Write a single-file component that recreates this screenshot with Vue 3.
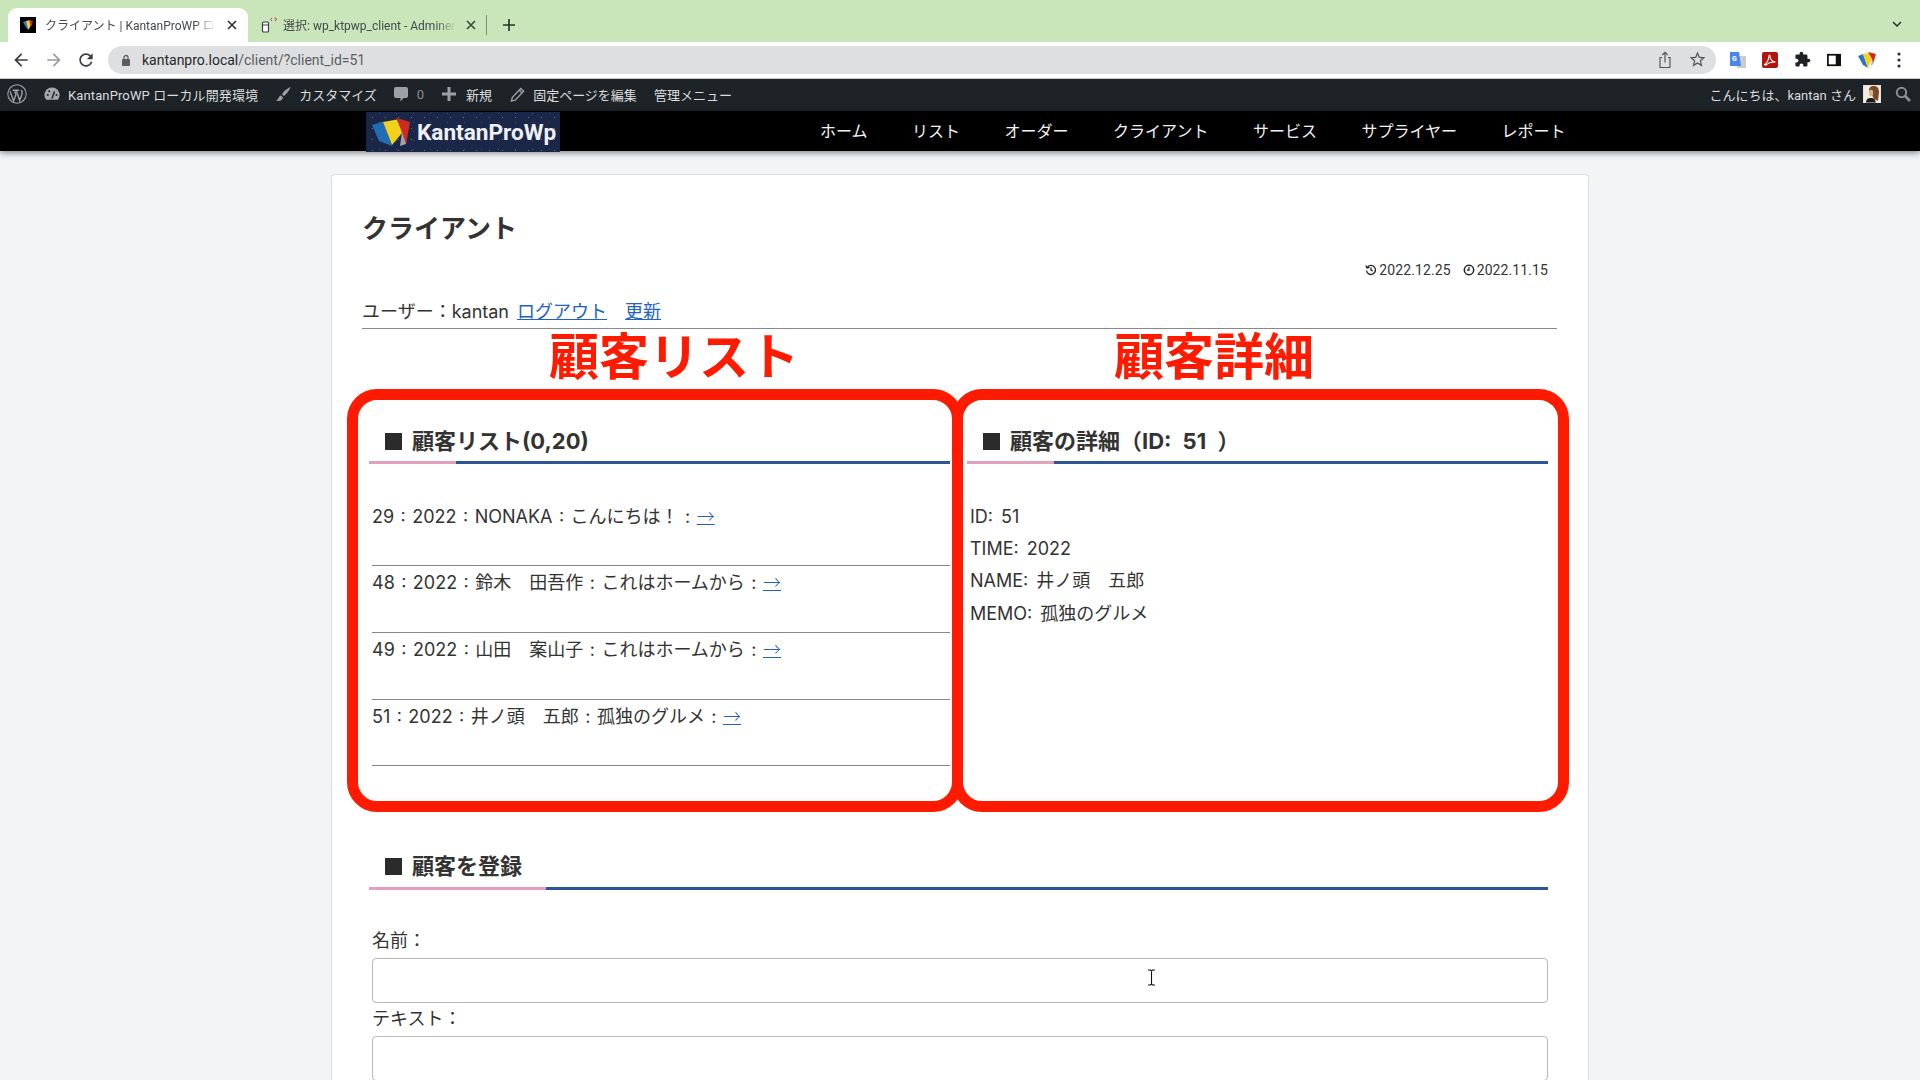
<template>
  <div class="screen">
    <!-- browser chrome -->
    <div class="tabstrip">
      <div class="tab active">
        <span class="favicon">
          <svg viewBox="0 0 16 16" width="16" height="16">
            <path d="M3 5l3-1 3 8-2 0z" fill="#2f7fc9"/>
            <path d="M6 4l4-1 1.5 4L8.5 13z" fill="#f3d21f"/>
            <path d="M9 3l4 1-2 6z" fill="#d8261c"/>
          </svg>
        </span>
        <span class="tab-title">クライアント | KantanProWP ローカル開発環境</span>
        <svg class="tab-close" viewBox="0 0 10 10" width="10" height="10"><path d="M1 1l8 8M9 1l-8 8" stroke="#2b2f33" stroke-width="1.6"/></svg>
      </div>
      <div class="tab second">
        <svg class="pma" viewBox="0 0 18 16" width="18" height="16">
          <rect x="2.5" y="5" width="6" height="10" rx="1" fill="#fff" stroke="#33434a" stroke-width="1.2"/>
          <path d="M2.5 8h6" stroke="#33434a"/>
          <path d="M12 4L10.5 2.500 12 1M14.500 1.500a1 1 0 1 1 1 1.500v1" fill="none" stroke="#c0272d" stroke-width=".9"/>
        </svg>
        <span class="tab-title">選択: wp_ktpwp_client - Adminer</span>
        <svg class="tab-close" viewBox="0 0 10 10" width="10" height="10"><path d="M1 1l8 8M9 1l-8 8" stroke="#3a4a3a" stroke-width="1.6"/></svg>
      </div>
      <span class="tab-sep"></span>
      <svg class="tab-new" viewBox="0 0 12 12" width="12" height="12"><path d="M6 0v12M0 6h12" stroke="#26312a" stroke-width="1.6"/></svg>
      <svg class="tab-chevron" viewBox="0 0 10 6" width="10" height="6"><path d="M1 1l4 4 4-4" fill="none" stroke="#26312a" stroke-width="1.5"/></svg>
    </div>

    <div class="toolbar">
      <svg class="tb-icon back" viewBox="0 0 24 24" width="20" height="20"><path d="M20 11H7.830l5.590-5.590L12 4l-8 8 8 8 1.410-1.410L7.830 13H20v-2z" fill="#3a3d40"/></svg>
      <svg class="tb-icon forward" viewBox="0 0 24 24" width="20" height="20"><path d="M4 11h12.170l-5.590-5.590L12 4l8 8-8 8-1.410-1.410L16.170 13H4v-2z" fill="#9a9c9e"/></svg>
      <svg class="tb-icon reload" viewBox="0 0 24 24" width="20" height="20"><path d="M17.650 6.350C16.200 4.900 14.210 4 12 4c-4.420 0-7.990 3.580-7.990 8s3.570 8 7.990 8c3.730 0 6.840-2.550 7.730-6h-2.080c-.82 2.330-3.040 4-5.650 4-3.310 0-6-2.690-6-6s2.690-6 6-6c1.660 0 3.140.69 4.220 1.780L13 11h7V4l-2.350 2.350z" fill="#3a3d40"/></svg>
      <div class="omnibox">
        <svg class="lock" viewBox="0 0 10 12" width="10" height="12">
          <rect x="1" y="5" width="8" height="7" rx="1" fill="#5b5e61"/>
          <path d="M3 5V3.500a2 2 0 0 1 4 0V5" fill="none" stroke="#5b5e61" stroke-width="1.300"/>
        </svg>
        <span class="url"><b>kantanpro.local</b>/client/?client_id=51</span>
        <svg class="share" viewBox="0 0 14 18" width="14" height="18">
          <path d="M4 6.500H2v10h10v-10h-2M7 11.500V1.500M4.300 4L7 1.300 9.700 4" fill="none" stroke="#55585b" stroke-width="1.200"/>
        </svg>
        <svg class="star" viewBox="0 0 24 24" width="19" height="19"><path d="M22 9.240l-7.190-.62L12 2 9.190 8.630 2 9.240l5.460 4.730L5.820 21 12 17.270 18.180 21l-1.630-7.030L22 9.240zM12 15.400l-3.760 2.270 1-4.280-3.320-2.880 4.380-.38L12 6.100l1.710 4.040 4.380.38-3.320 2.880 1 4.280L12 15.400z" fill="#55585b"/></svg>
      </div>
      <div class="ext-icons">
        <svg viewBox="0 0 16 16" width="16" height="16">
          <rect x="7" y="4" width="9" height="12" fill="#c9ccd1"/>
          <path d="M0 0h9l2 14H0z" fill="#4a86e8"/>
          <text x="2" y="9" font-size="7" font-weight="700" fill="#fff" font-family="Roboto, sans-serif">G</text>
        </svg>
        <svg viewBox="0 0 16 16" width="16" height="16">
          <rect width="16" height="16" rx="2" fill="#b3150e"/>
          <path d="M2.500 12.500c2-1 4.500-5 4.500-8.500 0-1.300 1-1.300 1 0 0 3 2 6 5.500 6-3 0-7 .8-8.500 2.300-1 1-2.200 1-2.500.2z" fill="none" stroke="#fff" stroke-width="1.100"/>
        </svg>
        <svg viewBox="0 0 24 24" width="17" height="17"><path d="M20.500 11H19V7c0-1.100-.9-2-2-2h-4V3.500C13 2.120 11.880 1 10.500 1S8 2.120 8 3.500V5H4c-1.100 0-1.990.9-1.990 2v3.800H3.500c1.490 0 2.700 1.210 2.700 2.700s-1.210 2.700-2.700 2.700H2V20c0 1.100.9 2 2 2h3.800v-1.500c0-1.490 1.210-2.700 2.700-2.700 1.490 0 2.700 1.210 2.700 2.700V22H17c1.100 0 2-.9 2-2v-4h1.500c1.380 0 2.500-1.120 2.500-2.500S21.880 11 20.500 11z" fill="#1f2124"/></svg>
        <svg viewBox="0 0 16 16" width="14" height="14"><path d="M0 1h16v14H0z" fill="#111"/><rect x="2" y="3" width="8" height="10" fill="#fff"/></svg>
        <svg viewBox="0 0 20 18" width="20" height="18">
          <path d="M1 5l5-2 5 14-5-3z" fill="#2a76c4"/>
          <path d="M6 3l6-1 3 6-4 9z" fill="#f4d31f"/>
          <path d="M11 1l8 2-3 10-1-5z" fill="#d62a1f"/>
          <path d="M15 8l1 5-2 2z" fill="#a9a9a9"/>
        </svg>
        <svg class="dots" viewBox="0 0 4 16" width="4" height="16"><circle cx="2" cy="2" r="1.600" fill="#2e3134"/><circle cx="2" cy="8" r="1.600" fill="#2e3134"/><circle cx="2" cy="14" r="1.600" fill="#2e3134"/></svg>
      </div>
    </div>

    <!-- wp admin bar -->
    <div class="adminbar">
      <svg class="wp-logo" viewBox="0 0 20 20" width="20" height="20">
        <circle cx="10" cy="10" r="9.200" fill="none" stroke="#9ca1a7" stroke-width="1.100"/>
        <path d="M3 7.200l3.600 9.800 2.300-6.400-1.200-3.400M7.200 6.200h-1.600M6.900 6.200h3.500M9.200 6.200l3.500 10.300 2.200-6.300c.5-1.600.1-3.200-.7-4.200M10.300 6.200h1.800" fill="none" stroke="#9ca1a7" stroke-width="1.400"/>
      </svg>
      <span class="ab-item site">
        <svg viewBox="0 0 16 16" width="16" height="16">
          <path d="M8 1.500a7.500 7.500 0 0 0-6.500 11.300l.6 1h11.800l.6-1A7.500 7.500 0 0 0 8 1.500z" fill="#a4a8ac"/>
          <path d="M8 12.500l2.500-7" stroke="#1d2327" stroke-width="1.500"/>
          <circle cx="3.800" cy="9" r="1" fill="#1d2327"/><circle cx="5.200" cy="5.200" r="1" fill="#1d2327"/><circle cx="12.500" cy="9" r="1" fill="#1d2327"/>
        </svg>
        KantanProWP ローカル開発環境
      </span>
      <span class="ab-item">
        <svg viewBox="0 0 16 16" width="16" height="16"><path d="M15.500 1C13 2 8.500 5 7 8.500l2 1.500C11.500 8 14.500 4 15.500 1zM6 9.500C3.500 10 4 13 1 14.500c3 1 6.500.3 7-3z" fill="#9ca1a7"/></svg>
        カスタマイズ
      </span>
      <span class="ab-item">
        <svg viewBox="0 0 14 16" width="14" height="16"><path d="M2 1h10a2 2 0 0 1 2 2v7a2 2 0 0 1-2 2H9.500L6.500 15.500V12H2a2 2 0 0 1-2-2V3a2 2 0 0 1 2-2z" fill="#9ca1a7"/></svg>
        <span class="muted">0</span>
      </span>
      <span class="ab-item new">
        <svg viewBox="0 0 14 14" width="14" height="14"><path d="M7 0v14M0 7h14" stroke="#9ca1a7" stroke-width="3"/></svg>
        新規
      </span>
      <span class="ab-item edit">
        <svg viewBox="0 0 16 16" width="15" height="15"><path d="M11.500 1.500l3 3L5.500 14l-4 1 1-4zM10 3.500l2.500 2.500" fill="none" stroke="#9ca1a7" stroke-width="1.500"/></svg>
        固定ページを編集
      </span>
      <span class="ab-item">管理メニュー</span>
      <span class="ab-right">
        こんにちは、kantan さん
        <svg class="avatar" viewBox="0 0 18 18" width="18" height="18">
          <rect width="18" height="18" fill="#f2ede4"/>
          <path d="M3 18c0-4 2-5 5-5 3 0 4 1 5 5z" fill="#1c1b1a"/>
          <path d="M6 6c0-4 2-5 5-5s5 2 5 6l-1 9-4-2-2-4z" fill="#7a4a25"/>
          <ellipse cx="8" cy="8" rx="2.200" ry="3.200" fill="#d9b591"/>
          <rect x="0" y="0" width="18" height="18" fill="none" stroke="#dcd6cc"/>
        </svg>
        <svg class="ab-search" viewBox="0 0 16 16" width="16" height="16"><circle cx="6.500" cy="6.500" r="4.700" fill="none" stroke="#8c8f94" stroke-width="2"/><path d="M10 10l5 5" stroke="#8c8f94" stroke-width="2.600"/></svg>
      </span>
    </div>

    <!-- site header -->
    <header class="site-header">
      <div class="logo">
        <svg viewBox="0 0 40 30" width="40" height="30">
          <path d="M0 8L11 4.500 20 29l-13-5z" fill="#1e6db5"/>
          <path d="M11 5l14-2.500 5.500 13L20 28z" fill="#f2d11c"/>
          <path d="M25 1l13 4-4 23-4-12z" fill="#cf2a20"/>
          <path d="M30 15l4 12-6 2z" fill="#a5a5a5"/>
        </svg>
        <span class="logo-text">KantanProWp</span>
      </div>
      <nav class="gnav">
        <span v-for="item in navItems" :key="item">{{ item }}</span>
      </nav>
    </header>

    <!-- page content -->
    <main class="card">
      <h1 class="page-title">クライアント</h1>
      <div class="dates">
        <svg viewBox="0 0 12 12" width="12" height="12">
          <path d="M2.200 3.500A4.500 4.500 0 1 1 1.500 6.500M1 1.500l1 2.500 2.500-.6M6 3.500V6l1.800 1" fill="none" stroke="#222" stroke-width="1.300"/>
        </svg>
        <span>2022.12.25</span>
        <svg class="clock" viewBox="0 0 12 12" width="12" height="12">
          <circle cx="6" cy="6" r="4.700" fill="none" stroke="#222" stroke-width="1.500"/>
          <path d="M6 3v3.200H3.800" fill="none" stroke="#222" stroke-width="1.200"/>
        </svg>
        <span>2022.11.15</span>
      </div>
      <div class="user-line">
        ユーザー：kantan <a>ログアウト</a><a class="reload-link">更新</a>
      </div>

      <div class="labels">
        <span class="label-left">顧客リスト</span>
        <span class="label-right">顧客詳細</span>
      </div>

      <div class="panels">
        <section class="panel panel-left">
          <h2 class="sec-title"><i></i>顧客リスト(0,20)</h2>
          <div class="sec-rule"></div>
          <ul class="client-list">
            <li v-for="row in clients" :key="row">{{ row }} : <a class="arrow">→</a></li>
          </ul>
        </section>
        <section class="panel panel-right">
          <h2 class="sec-title"><i></i>顧客の詳細（ID: 51 ）</h2>
          <div class="sec-rule"></div>
          <div class="detail">
            <div>ID: 51</div>
            <div>TIME: 2022</div>
            <div>NAME: 井ノ頭　五郎</div>
            <div>MEMO: 孤独のグルメ</div>
          </div>
        </section>
      </div>

      <section class="register">
        <h2 class="sec-title"><i></i>顧客を登録</h2>
        <div class="sec-rule"></div>
        <form class="reg-form">
          <label>名前：</label>
          <input class="first" type="text" />
          <label>テキスト：</label>
          <input type="text" />
        </form>
      </section>
    </main>

    <svg class="ibeam" viewBox="0 0 9 17" width="9" height="17">
      <path d="M1 1h2.500l1 1 1-1H8M4.500 2v13M1 16h2.500l1-1 1 1H8" fill="none" stroke="#111" stroke-width="1.100"/>
    </svg>
  </div>
</template>

<script setup>
const navItems = ['ホーム', 'リスト', 'オーダー', 'クライアント', 'サービス', 'サプライヤー', 'レポート']

const clients = [
  '29 : 2022 : NONAKA : こんにちは！',
  '48 : 2022 : 鈴木　田吾作 : これはホームから',
  '49 : 2022 : 山田　案山子 : これはホームから',
  '51 : 2022 : 井ノ頭　五郎 : 孤独のグルメ'
]
</script>

<style>
html, body {
  margin: 0;
  background: #f3f4f6;
}
</style>

<style scoped>
.screen {
  position: relative;
  width: 1920px;
  height: 1080px;
  overflow: hidden;
  background: #f3f4f6;
  font-family: Roboto, "Noto Sans CJK JP", sans-serif;
  color: #333;
}

/* tabs */
.tabstrip {
  display: flex;
  align-items: flex-end;
  height: 42px;
  background: #c8e6ba;
}

.tab {
  display: flex;
  align-items: center;
  height: 34px;
  font-size: 12px;
  color: #45494d;
}

.tab.active {
  width: 240px;
  margin-left: 8px;
  padding-left: 12px;
  box-sizing: border-box;
  background: #fff;
  border-radius: 9px 9px 0 0;
}

.favicon {
  display: flex;
  width: 16px;
  height: 16px;
  background: #000;
}

.tab-title {
  width: 174px;
  margin: -2px 0 0 9px;
  padding: 2px 0;
  overflow: hidden;
  white-space: nowrap;
  -webkit-mask-image: linear-gradient(to right, #000 86%, transparent 98%);
  mask-image: linear-gradient(to right, #000 86%, transparent 98%);
}

.tab-close {
  margin-left: 8px;
}

.tab.second {
  margin-left: 12px;
}

.second .tab-title {
  width: 177px;
  margin-left: 5px;
}

.second .tab-close {
  margin-left: 6px;
}

.tab-sep {
  align-self: flex-start;
  width: 1px;
  height: 20px;
  margin: 15px 0 0 10px;
  background: #7d8f76;
}

.tab-new {
  margin: 0 0 11px 16px;
}

.tab-chevron {
  margin: 0 18px 15px auto;
}

/* toolbar */
.toolbar {
  display: flex;
  align-items: center;
  height: 37px;
  padding-bottom: 1px;
  box-sizing: border-box;
  background: #fff;
  border-bottom: 1px solid #c9cbce;
}

.tb-icon.back {
  margin-left: 11px;
}

.tb-icon.forward {
  margin-left: 13px;
}

.tb-icon.reload {
  margin-left: 12px;
}

.omnibox {
  display: flex;
  align-items: center;
  width: 1608px;
  height: 28px;
  margin-left: 12px;
  padding: 0 9px 0 13px;
  box-sizing: border-box;
  background: #dedfe0;
  border-radius: 14px;
}

.url {
  margin-left: 11px;
  font-size: 14px;
  color: #5b5e61;
}

.url b {
  font-weight: 400;
  color: #26282b;
}

.share {
  margin-left: auto;
}

.star {
  margin-left: 16px;
}

.ext-icons {
  display: flex;
  align-items: center;
  gap: 16px;
  margin-left: 14px;
}

.ext-icons .dots {
  margin-left: 4px;
}

/* admin bar */
.adminbar {
  display: flex;
  align-items: center;
  gap: 17px;
  height: 32px;
  padding: 0 0 2px 7px;
  box-sizing: border-box;
  background: #1d2327;
  font-size: 13px;
  color: #dcdcde;
}

.ab-item {
  display: flex;
  align-items: center;
  gap: 8px;
  white-space: nowrap;
}

.ab-item.site {
  letter-spacing: 0.12px;
}

.ab-item.new {
  margin-left: 1px;
  gap: 10px;
}

.ab-item.edit {
  margin-left: 1px;
}

.muted {
  color: #8c8f94;
  margin-left: 1px;
}

.ab-right {
  display: flex;
  align-items: center;
  margin-left: auto;
  padding-right: 9px;
}

.avatar {
  margin-left: 7px;
}

.ab-search {
  margin-left: 14px;
}

/* header */
.site-header {
  position: relative;
  display: flex;
  height: 40px;
  padding-left: 366px;
  background: #000;
  box-shadow: 0 2px 6px rgba(0, 0, 0, 0.45);
}

.logo {
  display: flex;
  align-items: center;
  flex: none;
  width: 194px;
  height: 40px;
  margin-top: 1px;
  padding-left: 6px;
  box-sizing: border-box;
  background:
    radial-gradient(circle, rgba(255, 255, 255, 0.35) 0.5px, transparent 1px) 0 0 / 13px 11px,
    radial-gradient(circle, rgba(255, 255, 255, 0.2) 0.5px, transparent 1px) 5px 6px / 17px 9px,
    #1b2748;
}

.logo svg {
  flex: none;
}

.logo-text {
  margin-left: 5px;
  font-family: Roboto, sans-serif;
  font-size: 22.6px;
  font-weight: 700;
  color: #eef0f4;
}

.gnav {
  display: flex;
  align-items: center;
  gap: 44.5px;
  height: 38px;
  margin-left: 260px;
  font-size: 16px;
  color: #f2f2f2;
}

/* card */
.card {
  width: 1258px;
  height: 1000px;
  margin: 23px 0 0 331px;
  padding-left: 30px;
  box-sizing: border-box;
  background: #fff;
  border: 1px solid #dcdde0;
  border-radius: 4px;
  font-family: Inter, "Noto Sans CJK JP", sans-serif;
}

.page-title {
  margin: 36px 0 0;
  font-size: 26px;
  font-weight: 700;
  line-height: 36px;
  color: #333;
}

.dates {
  display: flex;
  align-items: center;
  justify-content: flex-end;
  height: 20px;
  margin-top: 12.5px;
  padding-right: 40px;
  font-family: Roboto, sans-serif;
  font-size: 14px;
  letter-spacing: 0.1px;
  color: #333;
}

.dates svg {
  margin-right: 2px;
}

.dates .clock {
  margin-left: 12px;
}

.user-line {
  width: 1195px;
  height: 32px;
  margin-top: 16.5px;
  font-size: 18px;
  line-height: 32px;
  word-spacing: 3px;
  border-bottom: 1px solid #888;
}

a {
  color: #1e63c0;
  text-decoration: underline;
}

.reload-link {
  margin-left: 18px;
}

.labels {
  display: flex;
  height: 60px;
  font-size: 50px;
  font-weight: 700;
  line-height: 57px;
  color: #ff1a00;
  white-space: nowrap;
}

.label-left {
  margin-left: 187px;
}

.label-right {
  margin-left: 315px;
}

.panels {
  display: flex;
  align-items: flex-start;
  margin-left: -15px;
}

.panel {
  height: 423px;
  box-sizing: border-box;
  border: 11px solid #ff1a00;
  border-radius: 30px;
}

.panel-left {
  width: 616px;
  padding: 0 2px 0 11px;
}

.panel-right {
  width: 617px;
  margin-left: -11px;
  padding: 0 10px 0 4px;
}

.sec-title {
  display: flex;
  align-items: center;
  gap: 10px;
  height: 34px;
  margin: 24px 0 2px;
  padding: 0 0 1px 16px;
  font-size: 22px;
  font-weight: 700;
  line-height: 33px;
  word-spacing: 6px;
  color: #333;
  white-space: nowrap;
}

.sec-title i {
  width: 17px;
  height: 17px;
  background: #2b2b2b;
}

.sec-rule {
  height: 3px;
  background: linear-gradient(to right, #e3a0bd 15%, #2f5597 15%);
}

.client-list {
  margin: 35.6px 0 0;
  padding: 0;
  list-style: none;
  font-size: 18px;
  line-height: 32.4px;
  word-spacing: 1.4px;
}

.client-list li {
  box-sizing: border-box;
  height: 66.7px;
  margin-left: 3px;
  padding-top: 1px;
  border-bottom: 1px solid #888;
}

.arrow {
  font-family: "Noto Sans CJK JP", sans-serif;
  font-weight: 300;
  line-height: 1;
}

.detail {
  margin-top: 35.6px;
  padding: 1px 0 0 3px;
  font-size: 18px;
  line-height: 32.4px;
  word-spacing: 3px;
}

/* form */
.register {
  width: 1179px;
  margin: 37px 0 0 7px;
}

.register .sec-title {
  margin: 0 0 4px;
  padding-bottom: 0;
}

.reg-form {
  display: flex;
  flex-direction: column;
  margin-top: 35px;
  padding-left: 3px;
  font-size: 18px;
  line-height: 32.4px;
}

.reg-form label {
  display: block;
}

.reg-form input {
  flex: none;
  height: 45px;
  box-sizing: border-box;
  background: #fff;
  border: 1px solid #b9b9b9;
  border-radius: 4px;
}

.reg-form input.first {
  margin-top: 1px;
}

.ibeam {
  position: absolute;
  left: 1147px;
  top: 969px;
}
</style>
